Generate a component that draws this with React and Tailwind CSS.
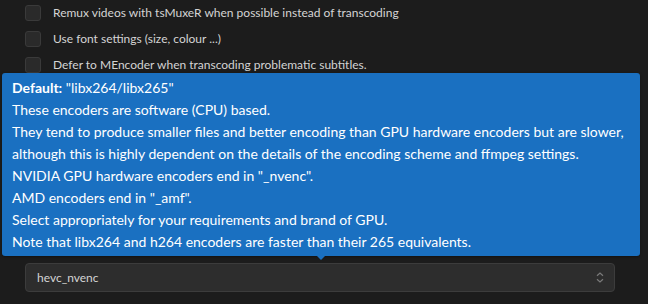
import React from "react";

const rows = [
  "Remux videos with tsMuxeR when possible instead of transcoding",
  "Use font settings (size, colour ...)",
  "Defer to MEncoder when transcoding problematic subtitles.",
];

const tip = [
  "These encoders are software (CPU) based.",
  "They tend to produce smaller files and better encoding than GPU hardware encoders but are slower,",
  "although this is highly dependent on the details of the encoding scheme and ffmpeg settings.",
  'NVIDIA GPU hardware encoders end in "_nvenc".',
  'AMD encoders end in "_amf".',
  "Select appropriately for your requirements and brand of GPU.",
  "Note that libx264 and h264 encoders are faster than their 265 equivalents.",
];

export default function App() {
  return (
    <div
      className="relative h-[304px] w-[648px] overflow-hidden bg-[#1c1c1c] text-[#d4d4d4]"
      style={{ fontFamily: 'Lato, "Noto Sans", sans-serif' }}
    >
      <div className="flex flex-col gap-[10px] pl-[25px] pt-[5px]">
        {rows.map((r) => (
          <label key={r} className="flex h-[16px] items-center gap-[12px] text-[12px]">
            <span className="h-[16px] w-[16px] shrink-0 rounded-[3px] border border-[#3a3a3a] bg-[#2a2a2a]" />
            <span className="leading-none">{r}</span>
          </label>
        ))}
      </div>

      <div className="pl-[25px] pt-[166px] text-[12px] leading-[16px]">
        Transcoding video encoder for H.265 (HEVC) using GPU
      </div>

      <div className="ml-[25px] mr-[33px] mt-[8px] flex h-[29px] items-center justify-between rounded-[4px] border border-[#3c3c3c] bg-[#2d2d2d] pl-[11px] pr-[10px] text-[12px]">
        <span>hevc_nvenc</span>
        <svg width="8" height="11" viewBox="0 0 8 11" fill="none" stroke="#7a7a7a" strokeWidth="1.2">
          <path d="M1 3.8 L4 1 L7 3.8" />
          <path d="M1 7.2 L4 10 L7 7.2" />
        </svg>
      </div>

      <div className="absolute left-[2px] top-[73px] w-[638px] rounded-[3px] bg-[#1a70c1] px-[10px] pb-[3px] pt-[4px] text-[14px] leading-[22px] text-white shadow-[0_1px_3px_rgba(0,0,0,0.4)]">
        <div>
          <span className="font-bold">Default:</span> "libx264/libx265"
        </div>
        {tip.map((t) => (
          <div key={t} className="whitespace-nowrap">{t}</div>
        ))}
      </div>
      <div className="absolute left-[317px] top-[256px] h-0 w-0 border-x-[4px] border-t-[4px] border-x-transparent border-t-[#1a70c1]" />
    </div>
  );
}
